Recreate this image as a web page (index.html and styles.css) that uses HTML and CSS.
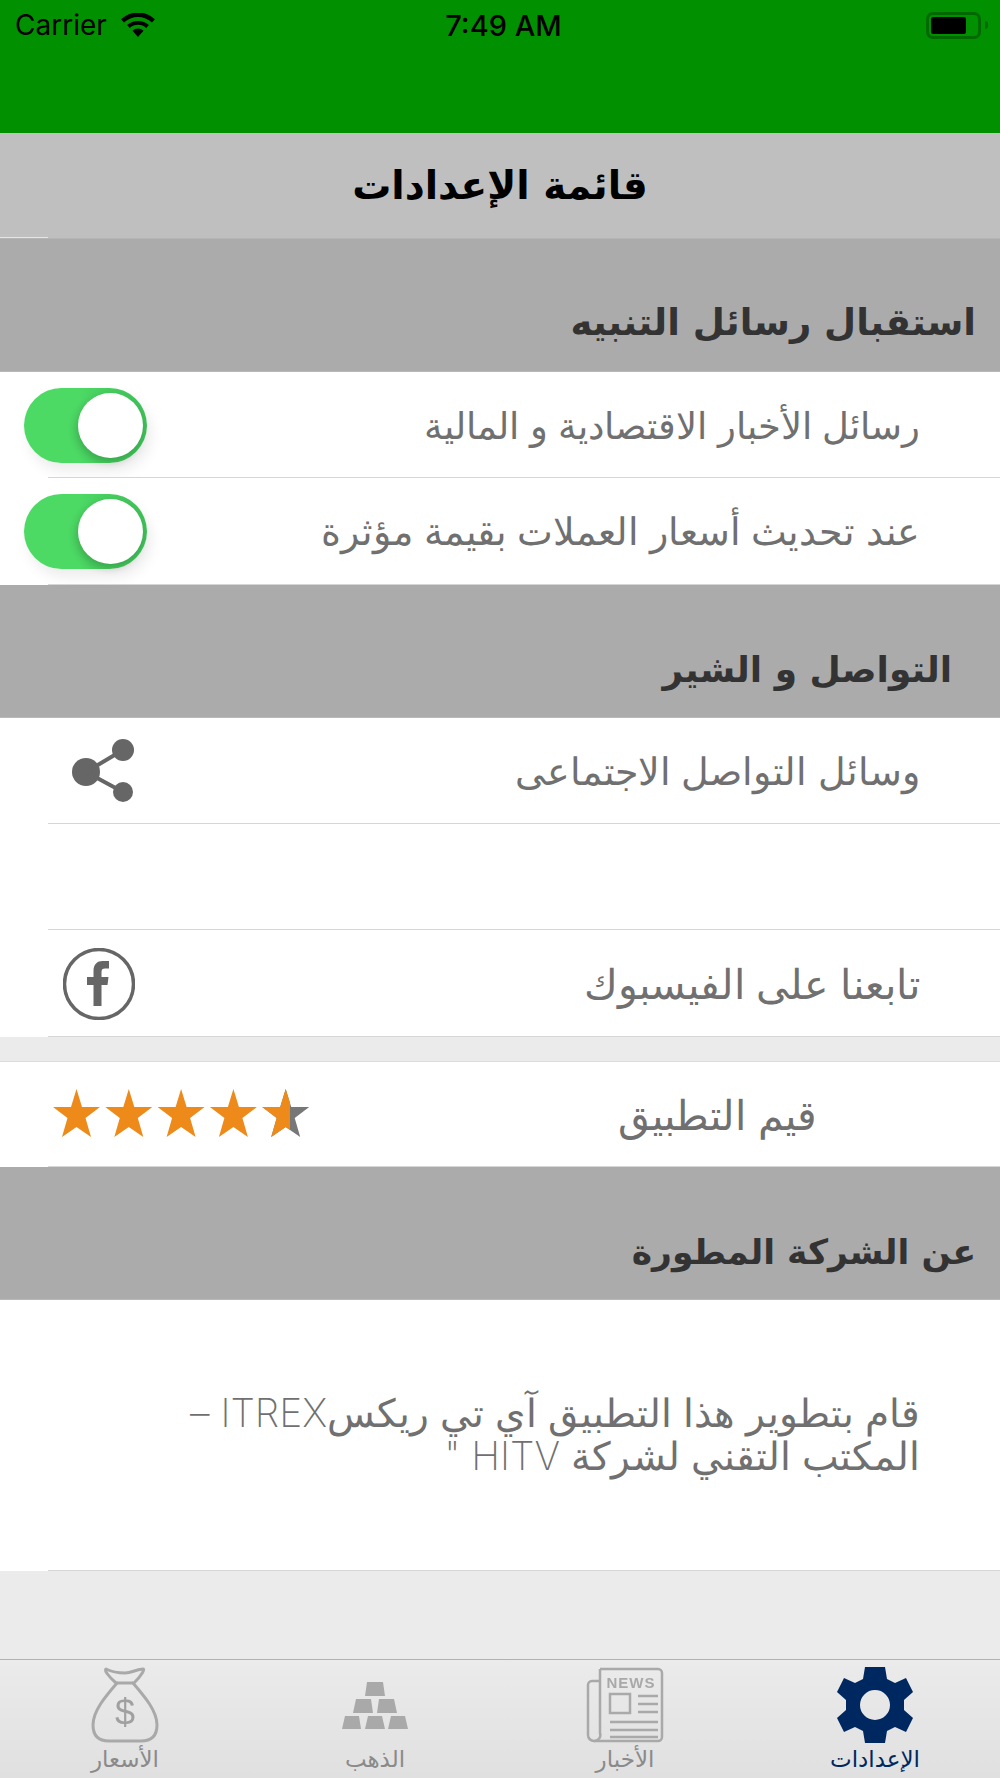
FILE: index.html
```html
<!DOCTYPE html>
<html lang="ar">
<head>
<meta charset="utf-8">
<title>قائمة الإعدادات</title>
<link rel="stylesheet" href="styles.css">
</head>
<body>
<div class="screen">
  <header class="header">
    <div class="status" dir="ltr">
      <div class="status-left">
        <span class="carrier">Carrier</span>
        <svg class="wifi" viewBox="0 0 34 24"><path d="M17 24l-5.600-6.200a8 8 0 0 1 11.200 0zM8.800 15a12 12 0 0 1 16.400 0l2.700-3a16.500 16.500 0 0 0-21.800 0zM3 9.500a20.500 20.500 0 0 1 28 0l3-3.300a25 25 0 0 0-34 0z"/></svg>
      </div>
      <span class="time">7:49 AM</span>
      <div class="status-right">
        <span class="battery"><span class="battery-fill"></span></span>
        <span class="battery-nub"></span>
      </div>
    </div>
  </header>

  <div class="title-bar" dir="rtl"><h1 class="title">قائمة الإعدادات</h1></div>

  <section class="section-head pad-near" dir="rtl"><h2 class="section-title title-large">استقبال رسائل التنبيه</h2></section>
  <div class="row" dir="rtl">
    <span class="label">رسائل الأخبار الاقتصادية و المالية</span>
    <span class="toggle"><span class="thumb"></span></span>
  </div>
  <div class="row row-last" dir="rtl">
    <span class="label label-mid">عند تحديث أسعار العملات بقيمة مؤثرة</span>
    <span class="toggle"><span class="thumb"></span></span>
  </div>

  <section class="section-head pad-far" dir="rtl"><h2 class="section-title">التواصل و الشير</h2></section>
  <div class="row" dir="rtl">
    <span class="label label-mid">وسائل التواصل الاجتماعى</span>
    <svg class="icon-share" viewBox="0 0 64 64"><g fill="#666"><circle cx="15" cy="33" r="14"/><circle cx="52" cy="11" r="11"/><circle cx="52" cy="53" r="10"/></g><path d="M15 33L52 11M15 33L52 53" stroke="#666" stroke-width="4" fill="none"/></svg>
  </div>
  <div class="row row-empty" dir="rtl"></div>
  <div class="row row-last" dir="rtl">
    <span class="label label-wide">تابعنا على الفيسبوك</span>
    <svg class="icon-fb" viewBox="0 0 72 72"><circle cx="36" cy="36" r="34.500" fill="none" stroke="#666" stroke-width="3.500"/><path d="M30.500 58V37h-6.500v-8h6.500v-6c0-7 4-10 9-10h6.500v7.500h-4c-2.500 0-3.500 1-3.500 3.500v5h7l-1 8h-6v21z" fill="#666"/></svg>
  </div>
  <div class="gap"></div>
  <div class="row row-last row-rate" dir="rtl">
    <span class="label label-wide">قيم التطبيق</span>
    <svg class="stars" viewBox="0 0 257 48">
      <defs>
        <polygon id="star" points="23.500,0 29,18 47,18 32.500,29 38,48 23.500,38 9,48 14.500,29 0,18 18,18"/>
        <clipPath id="half"><rect x="209" y="0" width="28" height="48"/></clipPath>
      </defs>
      <g fill="#ee8a19">
        <use href="#star" x="0"/><use href="#star" x="52.300"/><use href="#star" x="104.600"/><use href="#star" x="156.900"/>
        <use href="#star" x="209.200" fill="#777"/>
        <g clip-path="url(#half)"><use href="#star" x="209.200"/></g>
      </g>
    </svg>
  </div>

  <section class="section-head pad-near" dir="rtl"><h2 class="section-title title-small">عن الشركة المطورة</h2></section>
  <div class="row row-about" dir="rtl">
    <p class="label about">قام بتطوير هذا التطبيق آي تي ريكسITREX –<br>المكتب التقني لشركة HITV "</p>
  </div>

  <div class="spacer"></div>

  <nav class="tabs" dir="ltr">
    <div class="tab">
      <svg class="tab-icon" width="68" height="76" viewBox="0 0 68 76"><g fill="none" stroke="#a9a9a9" stroke-width="3" stroke-linejoin="round" stroke-linecap="round"><path d="M15 2c6 3 12 4 19 4s9-3 18-4c2 0-1 6-9 14H25C17 9 13 3 15 2z"/><path d="M26 16C14 30 2 44 2 58c0 11 6 16 16 16h32c10 0 16-5 16-16 0-14-12-28-24-42"/></g><text x="34" y="58" text-anchor="middle" class="bag-dollar">$</text></svg>
      <span class="tab-label">الأسعار</span>
    </div>
    <div class="tab">
      <svg class="tab-icon" width="68" height="76" viewBox="0 0 68 76"><g fill="#a9a9a9"><polygon points="26,15 42,15 44,29 24,29"/><polygon points="15,32 30,32 32,46 12,46"/><polygon points="38,32 53,32 56,46 36,46"/><polygon points="4,49 18,49 20,62 1,62"/><polygon points="27,49 41,49 44,62 24,62"/><polygon points="50,49 64,49 67,62 47,62"/></g></svg>
      <span class="tab-label">الذهب</span>
    </div>
    <div class="tab">
      <svg class="tab-icon" width="78" height="76" viewBox="0 0 78 76"><g fill="none" stroke="#a9a9a9" stroke-width="2.500"><path d="M14 2h58a4 4 0 0 1 4 4v64a4 4 0 0 1-4 4H8a6 6 0 0 1-6-6V18a4 4 0 0 1 4-4h8"/><path d="M14 2v64a6 6 0 0 1-6 8"/><rect x="24" y="27" width="20" height="19"/><path d="M52 29h20M52 37h20M52 45h20M24 55h48M24 63h48M24 70h48"/></g><text x="45" y="21" text-anchor="middle" class="news-word">NEWS</text></svg>
      <span class="tab-label">الأخبار</span>
    </div>
    <div class="tab tab-active">
      <svg class="tab-icon" width="76" height="76" viewBox="0 0 76 76"><path fill="#002860" fill-rule="evenodd" d="M28 0h20l2 12 8 4 11-5 7 14-9 8v10l9 8-7 14-11-5-8 4-2 12H28l-2-12-8-4-11 5-7-14 9-8V33l-9-8 7-14 11 5 8-4zM38 23a15 15 0 1 0 0 30 15 15 0 0 0 0-30z"/></svg>
      <span class="tab-label">الإعدادات</span>
    </div>
  </nav>
</div>
</body>
</html>
```

FILE: styles.css
```css
* { box-sizing: border-box; }
html, body { margin: 0; padding: 0; }
body { font-family: "DejaVu Sans", sans-serif; background: #ebebeb; }
.screen { width: 1000px; height: 1778px; display: flex; flex-direction: column; overflow: hidden; background: #ebebeb; }

.header { height: 133px; background: #009000; flex: none; }
.status { height: 50px; display: grid; grid-template-columns: 1fr auto 1fr; align-items: center; padding: 0 12px 0 15px; color: #000; }
.status-left { display: flex; align-items: center; gap: 14px; }
.carrier { font: 400 28px "Inter", sans-serif; }
.wifi { width: 34px; height: 24px; fill: #000; }
.time { font: 500 29px "Inter", sans-serif; margin-left: 4px; }
.status-right { display: flex; align-items: center; justify-content: flex-end; gap: 4px; }
.battery { width: 55px; height: 27px; border: 3px solid #006a00; border-radius: 7px; padding: 2px; display: block; }
.battery-fill { display: block; width: 35px; height: 100%; background: #000; border-radius: 2px; }
.battery-nub { width: 3px; height: 8px; background: #006a00; border-radius: 0 3px 3px 0; }

.title-bar { height: 106px; background: #bfbfbf; flex: none; display: flex; align-items: center; justify-content: center; border-bottom: 1px solid #b4b4b4; position: relative; }
.title-bar::after { content: ""; position: absolute; left: 0; bottom: 0; width: 48px; height: 1px; background: #e6e6e6; }
.title { margin: 0; font-size: 39px; font-weight: 700; color: #000; }

.section-head { height: 133px; background: #ababab; flex: none; display: flex; align-items: flex-end; padding-bottom: 27px; border-bottom: 1px solid #b8b8b8; }
.pad-near { padding-right: 24px; }
.pad-far { padding-right: 48px; }
.section-title { margin: 0; font-size: 36px; font-weight: 700; color: #333; }
.title-large { font-size: 37px; }
.title-small { font-size: 34.500px; }

.row { height: 106px; background: #fff; flex: none; display: flex; align-items: center; justify-content: space-between; padding: 0 80px 0 24px; position: relative; }
.row::after { content: ""; position: absolute; left: 48px; right: 0; bottom: 0; height: 1px; background: #d6d6d6; }
.row-last { height: 107px; }
.row-rate { padding-right: 183px; height: 106px; border-top: 1px solid #dcdcdc; padding-left: 53px; }
.row-empty { height: 106px; }
.row-about { height: 271px; align-items: center; padding-bottom: 4px; }
.label { font-family: "Inter", "DejaVu Sans", sans-serif; font-size: 37px; color: #707070; font-weight: 200; }
.label-mid { font-size: 37.500px; }
.label-wide { font-size: 41px; }
.about { margin: 0; line-height: 43px; font-size: 39px; }

.toggle { width: 123px; height: 75px; border-radius: 38px; background: linear-gradient(90deg, #4cd964 45%, #3fbf58 100%); box-shadow: 4px 8px 14px rgba(0,0,0,.08); position: relative; display: block; }
.thumb { position: absolute; top: 5px; right: 4px; width: 65px; height: 65px; border-radius: 50%; background: #fff; box-shadow: -2px 4px 8px rgba(0,0,0,.2); }
.icon-share { width: 64px; height: 64px; margin-left: 47px; }
.icon-fb { width: 72px; height: 72px; margin-left: 39px; }
.stars { width: 257px; height: 48px; margin-bottom: 4px; }
.gap { height: 24px; flex: none; background: #ebebeb; }

.spacer { flex: 1; background: #ebebeb; }
.tabs { height: 119px; flex: none; display: grid; grid-template-columns: repeat(4, 1fr); border-top: 1px solid #b0b0b0; background: linear-gradient(#ebebeb, #e0e0e0); }
.tab { display: flex; flex-direction: column; align-items: center; padding-top: 7px; }
.tab-icon { height: 76px; display: block; filter: blur(.5px); }
.tab-label { font-size: 23px; line-height: 28px; color: #8a8a8a; margin-top: 2px; }
.tab-active .tab-label { color: #002860; }
.bag-dollar { font: 400 36px "Liberation Sans", sans-serif; fill: #a0a0a0; }
.news-word { font: 700 15px "Liberation Sans", sans-serif; fill: #a9a9a9; letter-spacing: 1px; }
```
